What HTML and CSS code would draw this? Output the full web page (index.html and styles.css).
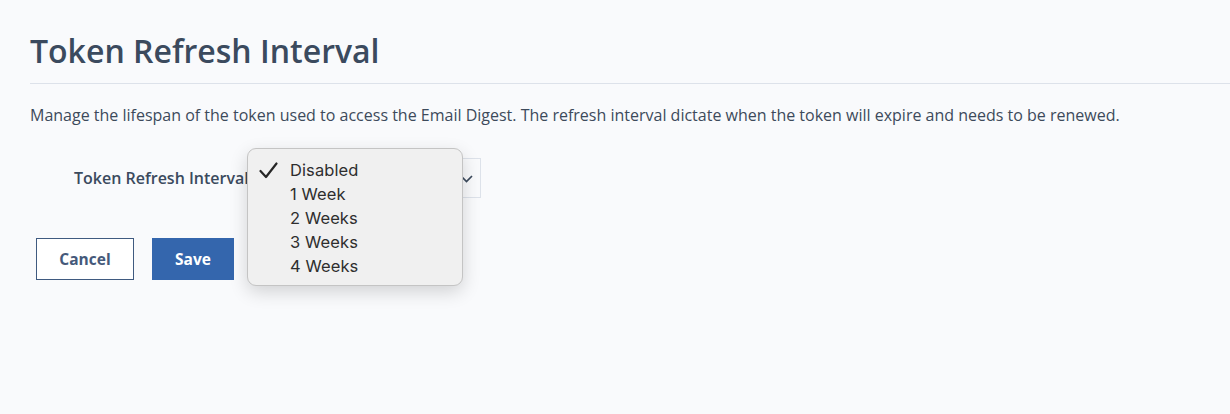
FILE: index.html
```html
<!DOCTYPE html>
<html>
<head>
<meta charset="utf-8">
<link rel="stylesheet" href="styles.css">
</head>
<body>
<main class="page">
  <h1 class="title">Token Refresh Interval</h1>
  <p class="desc">Manage the lifespan of the token used to access the Email Digest. The refresh interval dictate when the token will expire and needs to be renewed.</p>
  <div class="field">
    <label class="field-label">Token Refresh Interval</label>
    <div class="select-wrap">
      <div class="select">
        <svg class="chev" width="13" height="9" viewBox="0 0 13 9"><path d="M1 2 L6.5 7.5 L12 2" fill="none" stroke="#3b4a5d" stroke-width="1.7"/></svg>
      </div>
      <ul class="menu">
        <li class="item checked"><svg class="check" width="19" height="17" viewBox="0 0 19 17"><path d="M1.5 9 L7 15 L17.5 1.5" fill="none" stroke="#262626" stroke-width="2.2" stroke-linecap="round" stroke-linejoin="round"/></svg>Disabled</li>
        <li class="item">1 Week</li>
        <li class="item">2 Weeks</li>
        <li class="item">3 Weeks</li>
        <li class="item">4 Weeks</li>
      </ul>
    </div>
  </div>
  <div class="actions">
    <button class="btn btn-cancel">Cancel</button>
    <button class="btn btn-save">Save</button>
  </div>
</main>
</body>
</html>
```

FILE: styles.css
```css
html, body {
  margin: 0;
  padding: 0;
  background: #f9fafc;
  font-family: "Open Sans", sans-serif;
  color: #3d4a5b;
}
.page {
  padding: 26px 0 100px 30px;
}
.title {
  margin: 0;
  font-size: 32px;
  font-weight: 600;
  color: #3b4a5e;
  line-height: 50px;
  padding-bottom: 7px;
  border-bottom: 1px solid #dde2ea;
}
.desc {
  margin: 19px 0 0;
  font-size: 16px;
  line-height: 24px;
  color: #3d4a5b;
}
.field {
  display: flex;
  align-items: center;
  margin: 31px 0 0 44px;
  height: 40px;
}
.field-label {
  font-size: 16px;
  font-weight: 600;
  color: #3b4a5e;
  width: 181px;
  white-space: nowrap;
}
.select-wrap {
  position: relative;
  z-index: 10;
}
.select {
  width: 226px;
  height: 40px;
  border: 1px solid #dde2ea;
  background: #f9fafc;
  box-sizing: border-box;
  display: flex;
  align-items: center;
  justify-content: flex-end;
  padding: 0 7px 0 12px;
}
.chev { margin-top: 1px; }
.menu {
  position: absolute;
  left: -8px;
  top: -10px;
  width: 216px;
  box-sizing: border-box;
  margin: 0;
  padding: 9px 0 7px 0;
  list-style: none;
  background: #f0f0f0;
  border: 1px solid #c4c4c4;
  border-radius: 9px;
  box-shadow: 0 6px 18px rgba(0,0,0,0.16);
  font-family: Inter, "Liberation Sans", sans-serif;
  font-size: 16.5px;
  letter-spacing: 0.1px;
  color: #2e2e2e;
}
.item {
  position: relative;
  padding-left: 42px;
  line-height: 24px;
  height: 24px;
}
.check {
  position: absolute;
  left: 11px;
  top: 4px;
}
.actions {
  display: flex;
  gap: 18px;
  margin: 40px 0 0 6px;
}
.btn {
  height: 42px;
  font-family: "Open Sans", sans-serif;
  font-size: 15.5px;
  font-weight: 700;
  box-sizing: border-box;
  cursor: pointer;
}
.btn-cancel {
  width: 98px;
  background: #fff;
  color: #45597a;
  border: 1px solid #3f5a80;
}
.btn-save {
  width: 82px;
  background: #3466ad;
  color: #fff;
  border: none;
}
```
